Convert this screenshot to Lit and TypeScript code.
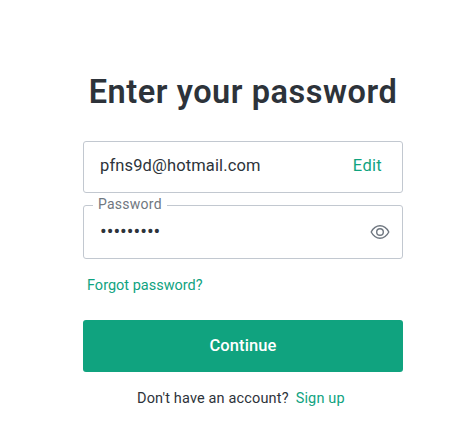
import { LitElement, html, css } from "lit";
import { customElement } from "lit/decorators.js";

@customElement("app-root")
export class AppRoot extends LitElement {
  static styles = css`
    :host {
      display: flex;
      flex-direction: column;
      box-sizing: border-box;
      width: 320px;
      height: 447px;
      margin-left: 83px;
      padding-top: 72px;
      font-family: Roboto, "Liberation Sans", sans-serif;
      font-size: 16.5px;
      font-weight: 400;
      color: #2d333a;
    }
    * { box-sizing: border-box; }
    h1 {
      margin: 0 -10px 29px;
      height: 40px;
      line-height: 40px;
      font-size: 32.5px;
      font-weight: 600;
      letter-spacing: 0.55px;
      text-align: center;
      white-space: nowrap;
    }
    .field {
      display: flex;
      align-items: center;
      justify-content: space-between;
      height: 52px;
      padding: 0 20px 4px 16px;
      border: 1px solid #c2c8d0;
      border-radius: 3px;
      letter-spacing: 0.13px;
    }
    .edit { letter-spacing: 0.3px; }
    .password {
      position: relative;
      height: 54px;
      margin-top: 12px;
      padding: 0 12px 0 16px;
    }
    .label {
      position: absolute;
      top: -11px;
      left: 9px;
      padding: 0 5px;
      line-height: 18px;
      font-size: 14px;
      letter-spacing: 0.25px;
      background: #fff;
      color: #6f7780;
    }
    .dots {
      height: 20px;
      margin-top: -2px;
      line-height: 20px;
      font-size: 20px;
      letter-spacing: -0.05px;
    }
    .eye { display: block; width: 20px; height: 16px; }
    a { color: #10a37f; text-decoration: none; }
    .forgot {
      align-self: flex-start;
      margin: 18px 0 0 4px;
      line-height: 18px;
      font-size: 14.5px;
    }
    .continue {
      height: 52px;
      margin-top: 25px;
      padding: 0 0 2px;
      border: 0;
      border-radius: 3px;
      background: #10a37f;
      color: #fff;
      font: 500 16.5px Roboto, "Liberation Sans", sans-serif;
      letter-spacing: 0.1px;
    }
    .signup {
      display: flex;
      gap: 7px;
      margin: 18px 0 0 54px;
      line-height: 18px;
      font-size: 14.5px;
      letter-spacing: 0.15px;
      white-space: nowrap;
    }
  `;

  render() {
    return html`
      <h1>Enter your password</h1>
      <div class="field"><span class="email">pfns9d@hotmail.com</span><a class="edit">Edit</a></div>
      <div class="field password">
        <span class="label">Password</span>
        <span class="dots">•••••••••</span>
        <svg class="eye" viewBox="0 0 20 16" fill="none" stroke="#6f7780" stroke-width="1.4">
          <path d="M1.200 8C3.200 4.200 6.200 1.800 10 1.800s6.800 2.400 8.800 6.200c-2 3.800-5 6.200-8.800 6.200S3.200 11.800 1.200 8Z" stroke-linejoin="round" />
          <circle cx="10" cy="8" r="3.300" />
        </svg>
      </div>
      <a class="forgot">Forgot password?</a>
      <button class="continue">Continue</button>
      <div class="signup"><span>Don't have an account?</span><a>Sign up</a></div>
    `;
  }
}
